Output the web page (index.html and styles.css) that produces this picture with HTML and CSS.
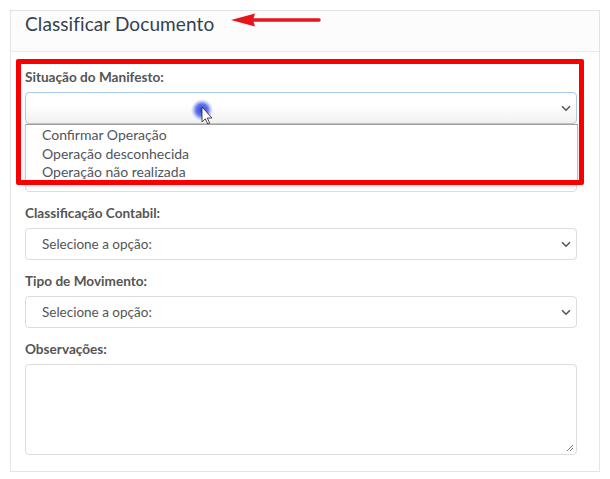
FILE: index.html
```html
<!DOCTYPE html>
<html lang="pt-BR">
<head>
<meta charset="utf-8">
<title>Classificar Documento</title>
<link rel="stylesheet" href="styles.css">
</head>
<body>
<div class="card">
  <div class="card-header">
    <h2 class="title">Classificar Documento</h2>
  </div>
  <div class="card-body">
    <div class="field field-open">
      <label class="label">Situação do Manifesto:</label>
      <div class="select select-focus">
        <span></span>
        <svg class="chev" width="10" height="7" viewBox="0 0 10 7"><path d="M1 1.2 5 5.2 9 1.2" fill="none" stroke="#555" stroke-width="1.6"/></svg>
      </div>
      <ul class="dropdown">
        <li>Confirmar Operação</li>
        <li>Operação desconhecida</li>
        <li>Operação não realizada</li>
      </ul>
    </div>
    <div class="field">
      <span class="label label-hidden"></span>
      <div class="select">
        <span></span>
        <svg class="chev" width="10" height="7" viewBox="0 0 10 7"><path d="M1 1.2 5 5.2 9 1.2" fill="none" stroke="#555" stroke-width="1.6"/></svg>
      </div>
    </div>
    <div class="field">
      <label class="label">Classificação Contabil:</label>
      <div class="select">
        <span>Selecione a opção:</span>
        <svg class="chev" width="10" height="7" viewBox="0 0 10 7"><path d="M1 1.2 5 5.2 9 1.2" fill="none" stroke="#555" stroke-width="1.6"/></svg>
      </div>
    </div>
    <div class="field">
      <label class="label">Tipo de Movimento:</label>
      <div class="select">
        <span>Selecione a opção:</span>
        <svg class="chev" width="10" height="7" viewBox="0 0 10 7"><path d="M1 1.2 5 5.2 9 1.2" fill="none" stroke="#555" stroke-width="1.6"/></svg>
      </div>
    </div>
    <div class="field field-last">
      <label class="label">Observações:</label>
      <div class="textarea">
        <svg class="grip" width="8" height="8" viewBox="0 0 8 8"><path d="M7 1 1 7M7 4 4 7" stroke="#777" stroke-width="1"/></svg>
      </div>
    </div>
  </div>
</div>

<svg class="arrow" width="92" height="18" viewBox="0 0 92 18">
  <path d="M22 9H88" stroke="#e8141b" stroke-width="3.5" stroke-linecap="round"/>
  <path d="M0 9 24 2.5 22 9 24 15.5Z" fill="#e8141b"/>
</svg>

<div class="highlight"></div>

<svg class="cursor" width="28" height="30" viewBox="0 0 28 30">
  <defs>
    <radialGradient id="glow" cx="0.5" cy="0.5" r="0.5">
      <stop offset="0" stop-color="#2a3fd8"/>
      <stop offset="0.55" stop-color="#4a60e6" stop-opacity="0.85"/>
      <stop offset="1" stop-color="#8fa0f5" stop-opacity="0"/>
    </radialGradient>
  </defs>
  <circle cx="11" cy="11" r="11" fill="url(#glow)"/>
  <path d="M11 8V23L14.3 19.8 16.8 25 18.7 24.1 16.3 19H21Z" fill="#fff" stroke="#333" stroke-width="0.9" stroke-linejoin="round"/>
</svg>
</body>
</html>
```
FILE: styles.css
```css
* { box-sizing: border-box; }

body {
  margin: 0;
  background: #ffffff;
  font-family: "Lato", "Open Sans", "Liberation Sans", sans-serif;
  color: #555;
  position: relative;
  width: 610px;
  height: 479px;
  overflow: hidden;
}

.card {
  margin: 10px 0 0 10px;
  width: 590px;
  border: 1px solid #e4e4e4;
  background: #fff;
}

.card-header {
  height: 41px;
  padding: 1px 0 0 14px;
  border-bottom: 1px solid #ebebeb;
  background: #fcfcfc;
}

.title {
  margin: 0;
  font-size: 19px;
  line-height: 23px;
  font-weight: 400;
  color: #34404e;
  letter-spacing: 0.1px;
}

.card-body {
  padding: 17px 22px 16px 14px;
}

.field {
  margin-bottom: 13px;
}
.field-open { position: relative; }
.field-last { margin-bottom: 0; }

.label {
  display: block;
  font-size: 13.6px;
  font-weight: 700;
  line-height: 17px;
  margin-bottom: 6px;
  color: #555;
}
.label-hidden { height: 17px; }

.select {
  height: 32px;
  border: 1px solid #dcdcdc;
  border-radius: 4px;
  padding: 0 5px 0 16px;
  display: flex;
  align-items: center;
  justify-content: space-between;
  font-size: 13.5px;
  color: #555;
  background: #fff;
}

.select-focus {
  border-color: #a9cbea;
  background: linear-gradient(#ffffff 40%, #f1f1f1);
}

.chev { display: block; }

.dropdown {
  position: absolute;
  left: 0;
  right: -1px;
  top: 55px;
  height: 60px;
  margin: 0;
  padding: 1px 0 0 0;
  list-style: none;
  background: #fff;
  border-top: 1px solid #a0a0a0;
  border-right: 1px solid #bbb;
  border-left: 1px solid #ccc;
  box-shadow: 0 2px 4px rgba(0,0,0,0.15);
  z-index: 2;
}

.dropdown li {
  padding-left: 16px;
  font-size: 14px;
  line-height: 18.5px;
  color: #4f5560;
}

.textarea {
  height: 91px;
  border: 1px solid #dcdcdc;
  border-radius: 4px;
  position: relative;
}

.grip {
  position: absolute;
  right: 2px;
  bottom: 2px;
}

.arrow {
  position: absolute;
  left: 231px;
  top: 11px;
}

.highlight {
  position: absolute;
  left: 16px;
  top: 59px;
  width: 568px;
  height: 126px;
  border: 5px solid #f80000;
  border-radius: 2px;
  z-index: 3;
}

.cursor {
  position: absolute;
  left: 191px;
  top: 99px;
  z-index: 4;
}
```
